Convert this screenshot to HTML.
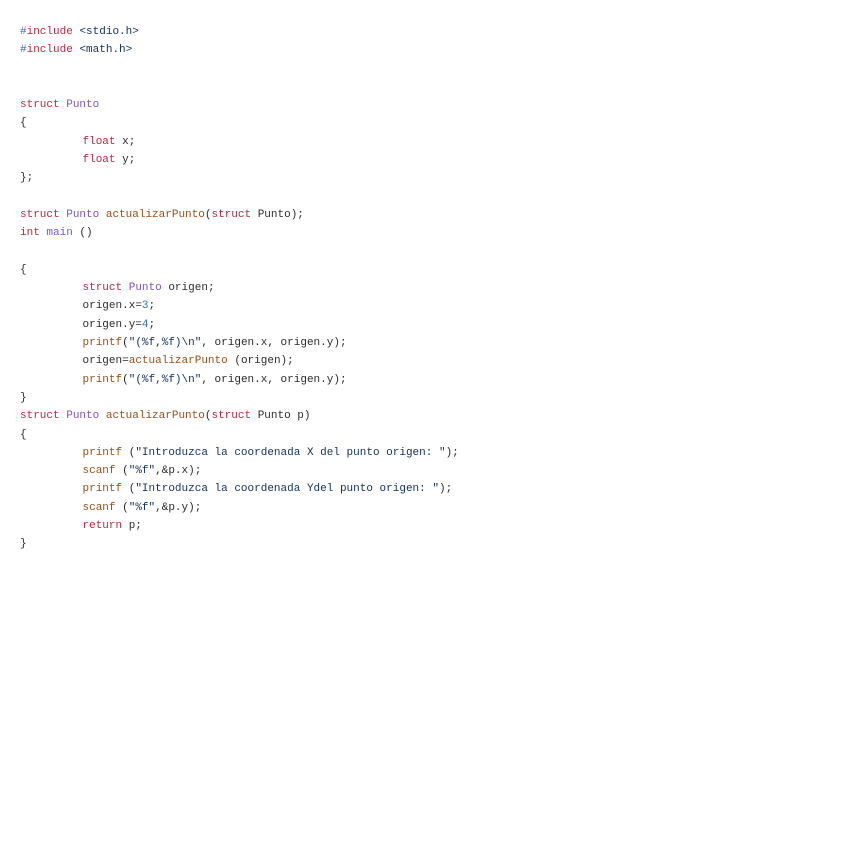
<!DOCTYPE html>
<html><head><style>
html,body{margin:0;background:#fff;}
pre{margin:0;position:absolute;left:20px;top:23px;font-family:"Liberation Mono",monospace;font-size:11px;line-height:18.3px;color:#2b2b2b;}
.k{color:#b8283e}.t{color:#7d52c0}.f{color:#9a4e16}.s{color:#12315f}.n{color:#2f6fc0}.h{color:#3e6aa6}
.i{display:inline-block;width:62.5px}
</style></head><body><pre><span class="h">#</span><span class="k">include</span> <span class="s">&lt;stdio.h&gt;</span>
<span class="h">#</span><span class="k">include</span> <span class="s">&lt;math.h&gt;</span>


<span class="k">struct</span> <span class="t">Punto</span>
{
<span class="i"></span><span class="k">float</span> x;
<span class="i"></span><span class="k">float</span> y;
};

<span class="k">struct</span> <span class="t">Punto</span> <span class="f">actualizarPunto</span>(<span class="k">struct</span> Punto);
<span class="k">int</span> <span class="t">main</span> ()

{
<span class="i"></span><span class="k">struct</span> <span class="t">Punto</span> origen;
<span class="i"></span>origen.x=<span class="n">3</span>;
<span class="i"></span>origen.y=<span class="n">4</span>;
<span class="i"></span><span class="f">printf</span>(<span class="s">"(%f,%f)\n"</span>, origen.x, origen.y);
<span class="i"></span>origen=<span class="f">actualizarPunto</span> (origen);
<span class="i"></span><span class="f">printf</span>(<span class="s">"(%f,%f)\n"</span>, origen.x, origen.y);
}
<span class="k">struct</span> <span class="t">Punto</span> <span class="f">actualizarPunto</span>(<span class="k">struct</span> Punto p)
{
<span class="i"></span><span class="f">printf</span> (<span class="s">"Introduzca la coordenada X del punto origen: "</span>);
<span class="i"></span><span class="f">scanf</span> (<span class="s">"%f"</span>,&amp;p.x);
<span class="i"></span><span class="f">printf</span> (<span class="s">"Introduzca la coordenada Ydel punto origen: "</span>);
<span class="i"></span><span class="f">scanf</span> (<span class="s">"%f"</span>,&amp;p.y);
<span class="i"></span><span class="k">return</span> p;
}</pre></body></html>
